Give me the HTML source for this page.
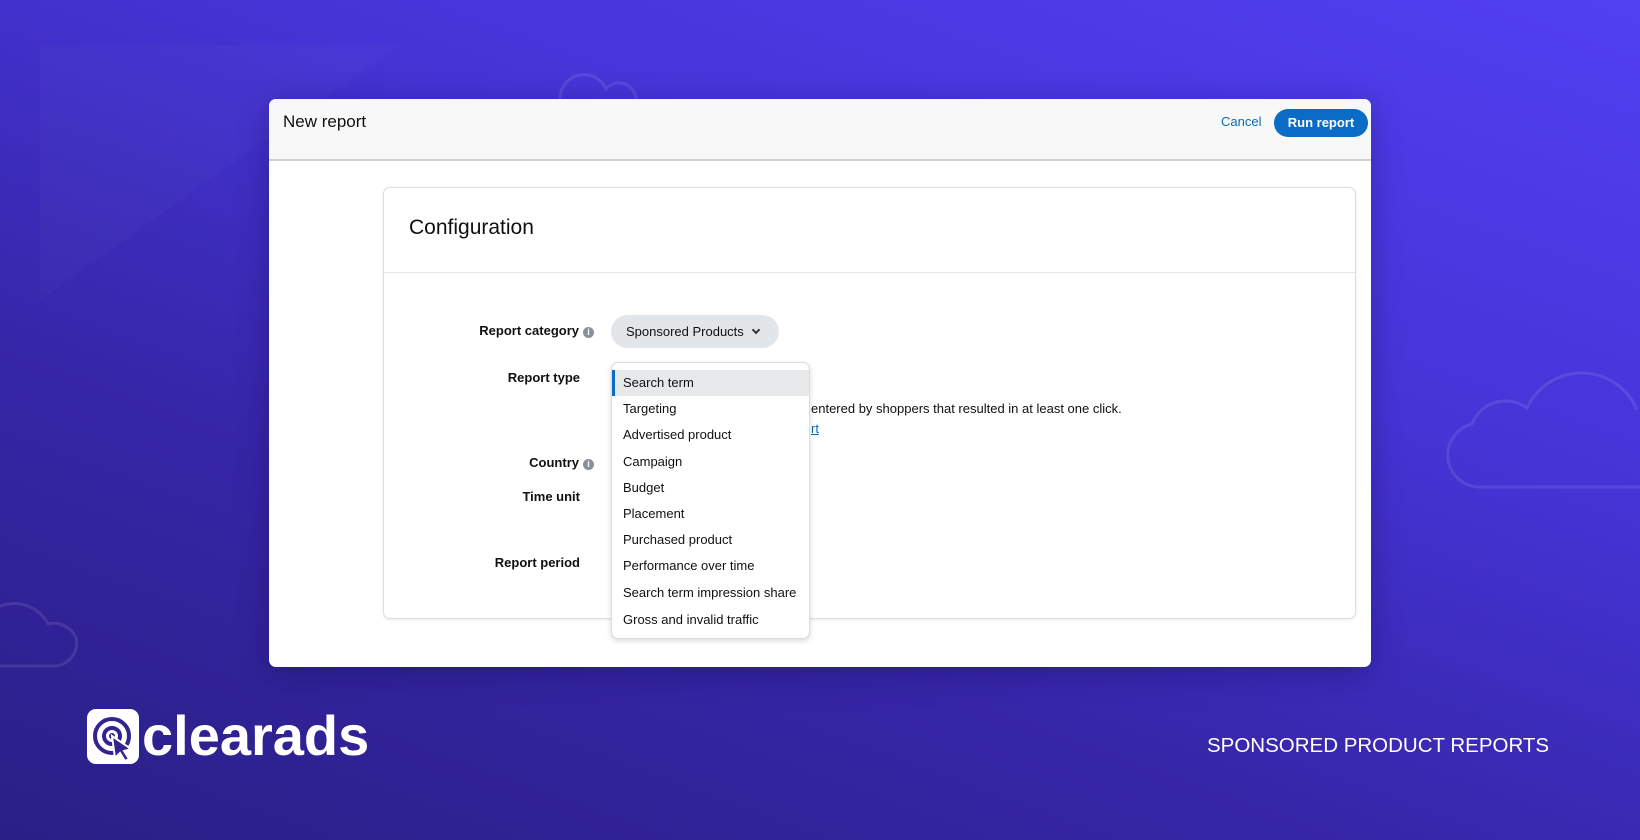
<!DOCTYPE html>
<html><head><meta charset="utf-8"><style>
*{margin:0;padding:0;box-sizing:border-box}
body{width:1640px;height:840px;overflow:hidden;position:relative;font-family:"Liberation Sans",sans-serif;
background:linear-gradient(200deg,#5140f2 0%,#4634d6 35%,#3626a8 65%,#2a1f86 100%);}
.abs{position:absolute}
.card{left:269px;top:99px;width:1102px;height:568px;background:#fff;border-radius:7px;box-shadow:0 6px 30px rgba(20,10,80,.35);overflow:hidden}
.hdr{left:0;top:0;width:100%;height:62px;background:#f8f8f8;border-bottom:2px solid #cfcfcf}
.inner{left:114px;top:88px;width:973px;height:432px;border:1px solid #dedede;border-radius:7px;background:#fff;box-shadow:0 1px 3px rgba(0,0,0,.08)}
.lbl{font-size:13px;font-weight:bold;color:#0f1111;text-align:right;width:300px}
.info{display:inline-block;width:11px;height:11px;border-radius:50%;background:#8a9099;color:#fff;font-size:9px;line-height:11px;text-align:center;font-weight:bold;vertical-align:0px;margin-left:4px}
.dd{left:611px;top:362px;width:199px;height:277px;background:#fff;border:1px solid #dcdcdc;border-radius:7px;box-shadow:0 2px 6px rgba(0,0,0,.15)}
.it{position:absolute;left:0;width:100%;height:26px;padding-left:11px;font-size:13px;line-height:26px;color:#0f1111}
</style></head><body>
<svg class="abs" style="left:0;top:0" width="1640" height="840">
<g fill="none" stroke="rgba(255,255,255,0.1)" stroke-width="3">
<path d="M1640 487 H1478 a32 32 0 0 1 -6 -63 a36 36 0 0 1 55 -16 a60 60 0 0 1 110 2"/>
<path d="M-10 666 H52 a23 23 0 0 0 24 -28 a24 24 0 0 0 -28 -14 a38 38 0 0 0 -60 -10"/>
<path d="M560 99 a24 24 0 0 1 46 -10 a17 17 0 0 1 30 10"/>
</g>
<path d="M40 45 H400 L40 300Z" fill="rgba(255,255,255,0.018)"/>
</svg>
<div class="abs card">
 <div class="abs hdr"></div>
 <div class="abs" style="left:14px;top:13px;font-size:17px;color:#0f1111">New report</div>
 <div class="abs" style="left:952px;top:15px;font-size:13px;color:#0a6cb5">Cancel</div>
 <div class="abs" style="left:1005px;top:10px;width:94px;height:28px;border-radius:14px;background:#0a6cc4;color:#fff;font-size:13px;font-weight:bold;text-align:center;line-height:28px">Run report</div>
 <div class="abs inner">
  <div class="abs" style="left:25px;top:28px;font-size:21px;color:#0f1111">Configuration</div>
  <div class="abs" style="left:0;top:84px;width:100%;height:1px;background:#e6e6e6"></div>
 </div>
</div>
<div class="abs lbl" style="left:294px;top:323px">Report category<span class="info">i</span></div>
<div class="abs lbl" style="left:280px;top:370px">Report type</div>
<div class="abs lbl" style="left:294px;top:455px">Country<span class="info">i</span></div>
<div class="abs lbl" style="left:280px;top:489px">Time unit</div>
<div class="abs lbl" style="left:280px;top:555px">Report period</div>
<div class="abs" style="left:611px;top:315px;width:168px;height:33px;border-radius:17px;background:#e3e6e9;font-size:13px;color:#0f1111;line-height:33px;padding-left:15px">Sponsored Products <span style="display:inline-block;width:6px;height:6px;border-right:2px solid #333;border-bottom:2px solid #333;transform:rotate(45deg);margin-left:6px;vertical-align:3px"></span></div>
<div class="abs" style="left:811px;top:401px;font-size:13px;color:#0f1111">entered by shoppers that resulted in at least one click.</div>
<div class="abs" style="left:811px;top:421px;font-size:13px;color:#0a6cb5;text-decoration:underline">rt</div>
<div class="abs dd">
 <div class="it" style="top:7px;background:#e6e8ea;border-left:3px solid #0a6cc4;padding-left:8px">Search term</div>
 <div class="it" style="top:33px">Targeting</div>
 <div class="it" style="top:59px">Advertised product</div>
 <div class="it" style="top:86px">Campaign</div>
 <div class="it" style="top:112px">Budget</div>
 <div class="it" style="top:138px">Placement</div>
 <div class="it" style="top:164px">Purchased product</div>
 <div class="it" style="top:190px">Performance over time</div>
 <div class="it" style="top:217px">Search term impression share</div>
 <div class="it" style="top:244px">Gross and invalid traffic</div>
</div>
<div class="abs" style="left:87px;top:709px;width:52px;height:55px;background:#fff;border-radius:9px">
 <svg width="52" height="55"><g fill="none" stroke="#2f2490" stroke-width="4"><circle cx="25" cy="27" r="17"/><circle cx="25" cy="27" r="8"/></g><circle cx="25" cy="27" r="3" fill="#2f2490"/><path d="M25 27 L44 40 L37 42 L42 50 L38 52 L33 44 L28 49Z" fill="#2f2490" stroke="#fff" stroke-width="2"/></svg>
</div>
<div class="abs" style="left:142px;top:704px;font-size:56px;font-weight:bold;color:#fff;letter-spacing:0px;line-height:64px">clearads</div>
<div class="abs" style="left:1207px;top:734px;font-size:20.5px;color:#fff">SPONSORED PRODUCT REPORTS</div>
</body></html>
